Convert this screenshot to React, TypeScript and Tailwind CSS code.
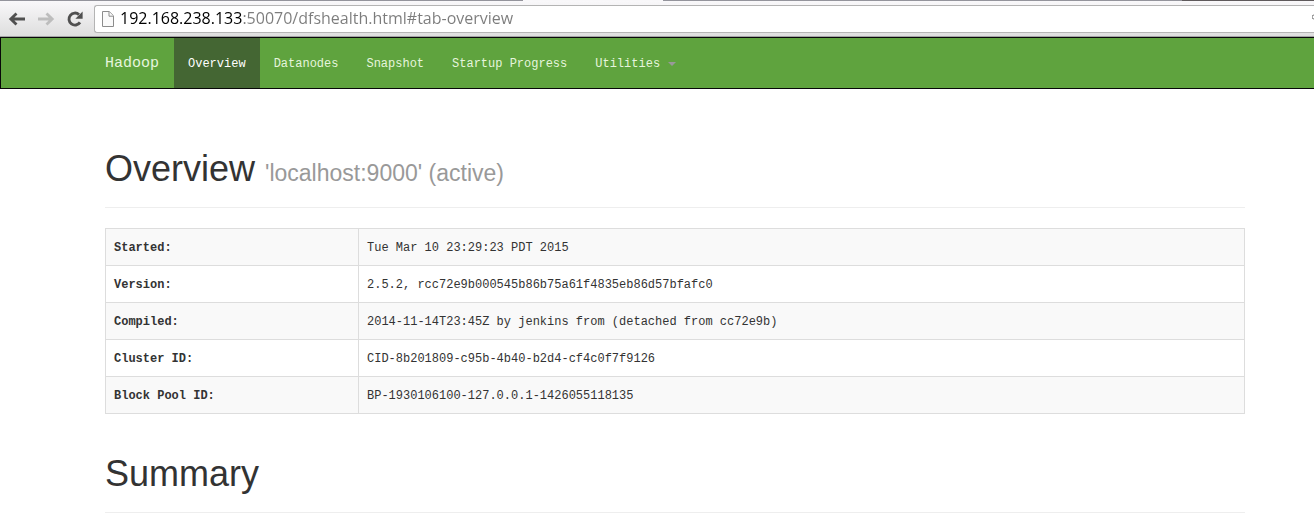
import React from "react";

const navItems = ["Overview", "Datanodes", "Snapshot", "Startup Progress"];

const details: [string, string][] = [
  ["Started:", "Tue Mar 10 23:29:23 PDT 2015"],
  ["Version:", "2.5.2, rcc72e9b000545b86b75a61f4835eb86d57bfafc0"],
  ["Compiled:", "2014-11-14T23:45Z by jenkins from (detached from cc72e9b)"],
  ["Cluster ID:", "CID-8b201809-c95b-4b40-b2d4-cf4c0f7f9126"],
  ["Block Pool ID:", "BP-1930106100-127.0.0.1-1426055118135"],
];

function ArrowIcon({ flip = false }: { flip?: boolean }) {
  return (
    <svg width="18" height="16" viewBox="0 0 18 16" fill="none" stroke="currentColor" strokeWidth="2.8" aria-hidden="true">
      {flip ? <path d="M1 8h14M9.5 2.5 15.2 8l-5.7 5.5" /> : <path d="M17 8H3M8.5 2.5 2.8 8l5.7 5.5" />}
    </svg>
  );
}

function ReloadIcon() {
  return (
    <svg width="18" height="16" viewBox="0 0 18 16" aria-hidden="true">
      <path d="M14 11.4A6 6 0 1 1 13 3.6" fill="none" stroke="currentColor" strokeWidth="2.9" />
      <path d="M16.6.6v7.2H9.4z" fill="currentColor" />
    </svg>
  );
}

function PageIcon() {
  return (
    <svg width="12" height="16" viewBox="0 0 12 16" fill="#fafafa" stroke="#8c8c8c" aria-hidden="true">
      <path d="M.5.5h6.7l4.3 4.3v10.7H.5z" />
      <path d="M7 .8v4.4h4.3" />
    </svg>
  );
}

function BrowserBar() {
  return (
    <div className="bg-[#f8f7f9]">
      <div className="flex h-px">
        <div className="w-[523px] bg-[#94949c]" />
        <div className="w-[140px]" />
        <div className="w-[519px] bg-[#94949c]" />
        <div className="flex-1 bg-[#5f5a5c]" />
      </div>
      <div className="flex h-9 items-center border-b border-[#a3a3a3] bg-linear-to-b from-[#f9f8fa] to-[#dedede]">
        <div className="flex w-[94px] shrink-0 items-center gap-[11px] pl-2">
          <button type="button" aria-label="Back" className="text-[#505050]"><ArrowIcon /></button>
          <button type="button" aria-label="Forward" className="text-[#bdbdbd]"><ArrowIcon flip /></button>
          <button type="button" aria-label="Reload" className="text-[#505050]"><ReloadIcon /></button>
        </div>
        <label className="flex h-7 flex-1 items-center gap-[6px] rounded-l-[3px] border border-r-0 border-[#b4b4b4] bg-white pl-[7px]">
          <PageIcon />
          <input
            type="text"
            aria-label="Address"
            defaultValue="192.168.238.133:50070/dfshealth.html#tab-overview"
            className="h-6 min-w-0 flex-1 bg-linear-to-r from-black from-[122px] to-[#7c7c7c] to-[122px] bg-clip-text pb-[2px] font-['Open_Sans',sans-serif] text-[16px] text-transparent outline-none"
          />
          <svg width="2" height="10" viewBox="0 0 2 10" className="shrink-0" fill="none" stroke="#777777" aria-hidden="true">
            <path d="M2 1A2 2 0 0 0 2 5" />
          </svg>
        </label>
      </div>
    </div>
  );
}

function NavBar() {
  return (
    <nav className="flex h-[52px] border border-r-0 border-[#080808] bg-[#5fa33e] pl-[89px] text-[#e6f5dd]">
      <a href="#" className="flex items-center px-[15px] pt-[2px] text-[15px]">Hadoop</a>
      {navItems.map((item, i) => (
        <a
          key={item}
          href="#"
          className={
            i === 0
              ? "flex items-center bg-[#446633] px-[14px] pt-[2px] text-white"
              : "flex items-center px-[14px] pt-[2px]"
          }
        >
          {item}
        </a>
      ))}
      <a href="#" className="flex items-center gap-2 px-[14px] pt-[2px]">
        Utilities
        <span className="border-x-4 border-t-4 border-x-transparent border-t-[#999999]" />
      </a>
    </nav>
  );
}

function PageHeader({ title, note }: { title: string; note?: string }) {
  return (
    <header className="border-b border-[#eeeeee] pb-[18px]">
      <h1 className="font-['Liberation_Sans',sans-serif] text-[36px] leading-10 text-[#333333]">
        {title}
        {note && <small className="pl-[10px] text-[23px] leading-none text-[#999999]">{note}</small>}
      </h1>
    </header>
  );
}

export default function App() {
  return (
    <div className="bg-white font-['Liberation_Mono',monospace] text-[12px] text-[#333333]">
      <BrowserBar />
      <NavBar />
      <main className="pt-[60px] pr-[69px] pl-[105px]">
        <PageHeader title="Overview" note="'localhost:9000' (active)" />
        <table className="mt-5 mb-10 w-full border-collapse border border-[#dddddd]">
          <tbody>
            {details.map(([name, value]) => (
              <tr key={name} className="h-[37px] odd:bg-[#f9f9f9]">
                <th scope="row" className="w-[253px] border border-[#dddddd] px-2 pt-[2px] text-left font-bold">{name}</th>
                <td className="border border-[#dddddd] px-2 pt-[2px]">{value}</td>
              </tr>
            ))}
          </tbody>
        </table>
        <PageHeader title="Summary" />
      </main>
    </div>
  );
}
